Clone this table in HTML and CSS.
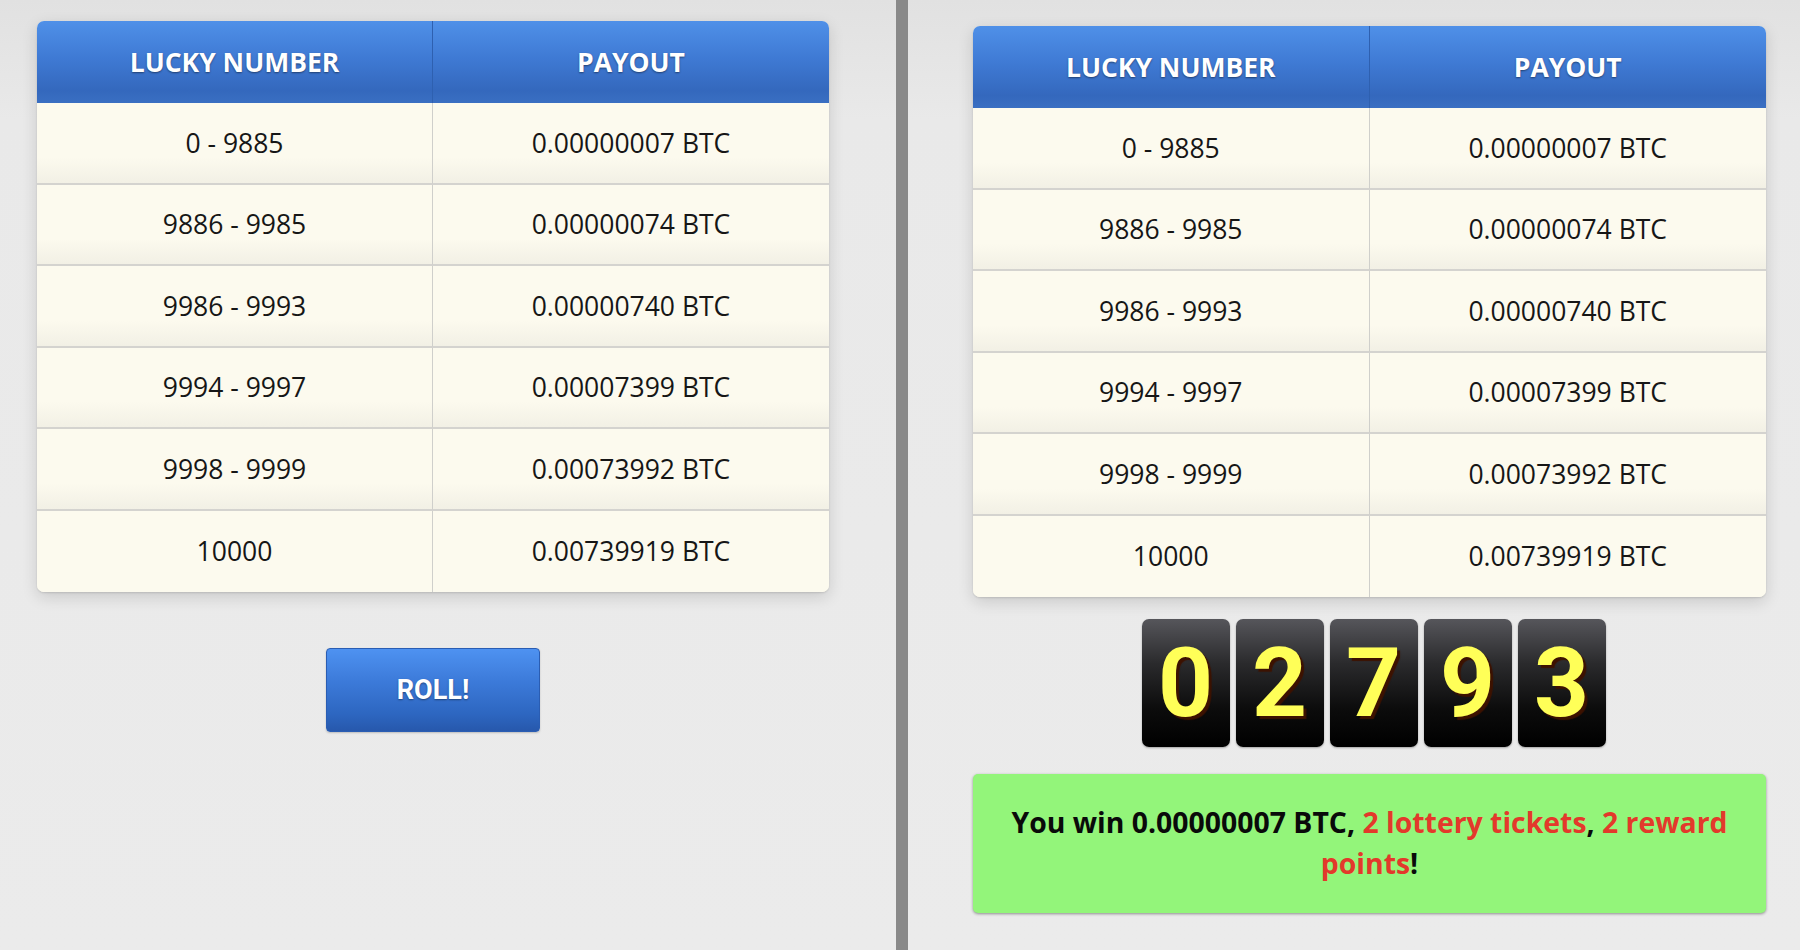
FILE: index.html
```html
<!DOCTYPE html>
<html>
<head>
<meta charset="utf-8">
<link rel="stylesheet" href="styles.css">
</head>
<body>
<div class="page">
  <section class="panel panel-left">
    <table class="payout">
      <thead>
        <tr><th>LUCKY NUMBER</th><th>PAYOUT</th></tr>
      </thead>
      <tbody>
        <tr><td>0 - 9885</td><td>0.00000007 BTC</td></tr>
        <tr><td>9886 - 9985</td><td>0.00000074 BTC</td></tr>
        <tr><td>9986 - 9993</td><td>0.00000740 BTC</td></tr>
        <tr><td>9994 - 9997</td><td>0.00007399 BTC</td></tr>
        <tr><td>9998 - 9999</td><td>0.00073992 BTC</td></tr>
        <tr><td>10000</td><td>0.00739919 BTC</td></tr>
      </tbody>
    </table>
    <div class="roll-wrap">
      <button class="roll">ROLL!</button>
    </div>
  </section>
  <div class="divider"></div>
  <section class="panel panel-right">
    <table class="payout">
      <thead>
        <tr><th>LUCKY NUMBER</th><th>PAYOUT</th></tr>
      </thead>
      <tbody>
        <tr><td>0 - 9885</td><td>0.00000007 BTC</td></tr>
        <tr><td>9886 - 9985</td><td>0.00000074 BTC</td></tr>
        <tr><td>9986 - 9993</td><td>0.00000740 BTC</td></tr>
        <tr><td>9994 - 9997</td><td>0.00007399 BTC</td></tr>
        <tr><td>9998 - 9999</td><td>0.00073992 BTC</td></tr>
        <tr><td>10000</td><td>0.00739919 BTC</td></tr>
      </tbody>
    </table>
    <div class="digits">
      <div class="digit">0</div>
      <div class="digit">2</div>
      <div class="digit">7</div>
      <div class="digit">9</div>
      <div class="digit">3</div>
    </div>
    <div class="result">
      <div class="result-line">You win 0.00000007 BTC, <span class="red">2 lottery tickets</span>, <span class="red">2 reward</span></div>
      <div class="result-line"><span class="red">points</span>!</div>
    </div>
  </section>
</div>
</body>
</html>
```

FILE: styles.css
```css
html, body {
  margin: 0;
  padding: 0;
}
body {
  width: 1800px;
  height: 950px;
  overflow: hidden;
  background: linear-gradient(#e1e1e1 0px, #e9e9e9 120px, #ebebeb 950px);
  font-family: "Open Sans", "DejaVu Sans", sans-serif;
}
.page {
  display: flex;
  height: 950px;
}
.panel {
  box-sizing: border-box;
  display: flex;
  flex-direction: column;
}
.panel-left {
  width: 896px;
  padding: 21px 67px 0 37px;
}
.panel-right {
  flex: 1;
  padding: 26px 34px 0 65px;
}
.divider {
  width: 12px;
  background: #898989;
}
.payout {
  width: 100%;
  border-collapse: separate;
  border-spacing: 0;
  table-layout: fixed;
  border-radius: 7px;
  overflow: hidden;
  box-shadow: 0 5px 16px rgba(0, 0, 0, 0.14), 0 1px 2px rgba(0, 0, 0, 0.12);
  background: #fcfaee;
}
.payout th {
  height: 82px;
  padding: 0;
  background: linear-gradient(#4f90e8 0%, #3f7ad4 45%, #3468bd 85%, #3a6fc2 100%);
  color: #fff;
  font-weight: 700;
  font-size: 26.5px;
  text-shadow: 0 1px 2px rgba(0, 0, 0, 0.45);
  text-align: center;
  vertical-align: middle;
}
.payout th:first-child {
  border-right: 1px solid #2e60b0;
}
.payout td {
  height: 79.5px;
  padding: 0;
  text-align: center;
  vertical-align: middle;
  font-size: 26.5px;
  color: #161616;
  background: linear-gradient(#fcfaee 0%, #fcfaee 68%, #f2f0e5 100%);
  border-bottom: 2px solid #d4d3cf;
}
.payout tr:last-child td {
  border-bottom: none;
  height: 81.5px;
  background: #fcfaee;
}
.payout td:first-child {
  border-right: 1px solid #cfcfcb;
}
.roll-wrap {
  display: flex;
  justify-content: center;
  margin-top: 56px;
}
.roll {
  width: 214px;
  height: 84px;
  border: 1px solid #2a5db3;
  border-radius: 4px;
  background: linear-gradient(#4e92f1 0%, #3c7ad9 40%, #2d66c0 80%, #2758ac 100%);
  color: #fff;
  font-family: Roboto, "Liberation Sans", sans-serif;
  font-weight: 700;
  font-size: 27px;
  text-shadow: 0 1px 2px rgba(0, 0, 0, 0.4);
  box-shadow: 0 1px 2px rgba(0, 0, 0, 0.2);
  padding: 0;
  cursor: pointer;
}
.digits {
  display: flex;
  justify-content: center;
  gap: 6px;
  margin-top: 22px;
  padding-left: 8px;
}
.digit {
  width: 88px;
  height: 128px;
  display: flex;
  align-items: center;
  justify-content: center;
  border-radius: 7px;
  background: linear-gradient(#56565b 0%, #2a2a2c 35%, #0c0c0c 70%, #000 100%);
  color: #ffff58;
  font-family: Roboto, "Liberation Sans", sans-serif;
  font-weight: 700;
  font-size: 96px;
  line-height: 1;
  text-shadow: 3px 3px 1px #3d1200;
  box-shadow: 0 1px 2px rgba(0, 0, 0, 0.3);
}
.result {
  margin-top: 27px;
  height: 139px;
  box-sizing: border-box;
  padding: 28px 20px;
  background: #93f57a;
  border-radius: 5px;
  box-shadow: 0 1px 3px rgba(0, 0, 0, 0.4);
  color: #0a0a0a;
  font-weight: 700;
  font-size: 28.4px;
  line-height: 41px;
  text-align: center;
}
.result-line {
  white-space: nowrap;
}
.red {
  color: #e3392b;
}
```
